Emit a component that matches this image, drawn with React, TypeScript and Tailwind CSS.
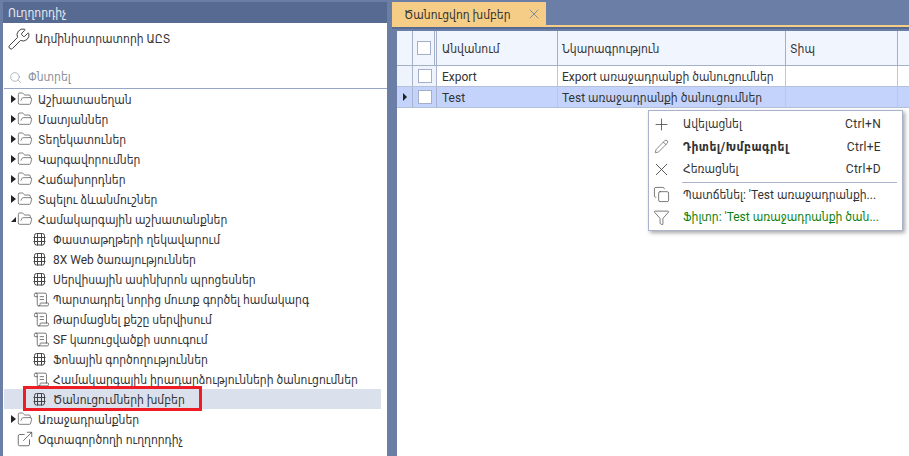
import { Wrench, Search, FolderOpen, ScrollText, ExternalLink, Plus, Pencil, X, Copy, Funnel } from "lucide-react";

const font = { fontFamily: "Roboto,'DejaVu Sans Condensed','DejaVu Sans',sans-serif" };

function GridIcon() {
  return (
    <svg width="13" height="13" viewBox="0 0 13 13" fill="none" stroke="#444" strokeWidth="1" className="shrink-0">
      <rect x="1.5" y="0.5" width="10" height="11.5" rx="2" />
      <path d="M0.5 4.5H12.5M0.5 8.5H12.5M4.5 0.5V12.5M8.5 0.5V12.5" />
    </svg>
  );
}

function Folder({ text, open }: { text: string; open?: boolean }) {
  return (
    <div className="flex h-5 items-center pl-[7px] text-[#333]">
      <span
        className={
          open
            ? "mr-[1px] h-0 w-0 border-b-[5px] border-l-[5px] border-b-[#222] border-l-transparent"
            : "mr-[1px] h-0 w-0 border-y-[4px] border-l-[5px] border-y-transparent border-l-[#222]"
        }
      />
      <FolderOpen size={16} strokeWidth={1} color="#444" className="shrink-0" />
      <span className="ml-[5px] whitespace-nowrap pt-[2px]">{text}</span>
    </div>
  );
}

function Child({ text, kind, selected }: { text: string; kind: "grid" | "script"; selected?: boolean }) {
  return (
    <div className={`relative flex h-5 items-center pl-[29px] text-[#333] ${selected ? "mr-[6px] bg-[#dbe1ec]" : ""}`}>
      <span className="flex w-[20px] shrink-0 items-center">
        {kind === "grid" ? <GridIcon /> : <ScrollText size={17} strokeWidth={1} color="#444" />}
      </span>
      <span className="whitespace-nowrap pt-[2px]">{text}</span>
      {selected && (
        <span className="absolute top-[-3px] left-[19px] h-[25px] w-[179px] border-[3px] border-[#ee1c25]" />
      )}
    </div>
  );
}

function MenuItem({
  icon,
  text,
  shortcut,
  bold,
  green,
}: {
  icon: React.ReactNode;
  text: string;
  shortcut?: string;
  bold?: boolean;
  green?: boolean;
}) {
  return (
    <div className={`flex h-[22.5px] items-center pr-[21px] ${green ? "text-[#0b7f0b]" : "text-[#333]"}`}>
      <span className="flex w-[25px] shrink-0 justify-center">{icon}</span>
      <span className={`ml-[9px] whitespace-nowrap ${bold ? "font-bold tracking-[0.5px]" : ""}`}>{text}</span>
      {shortcut && <span className="ml-auto whitespace-nowrap text-[12px] tracking-[0.3px]">{shortcut}</span>}
    </div>
  );
}

function Check() {
  return <span className="block h-[14px] w-[14px] border border-[#a3aec8] bg-white" />;
}

function Row({
  name,
  desc,
  current,
}: {
  name: string;
  desc: string;
  current?: boolean;
}) {
  const bg = current ? "bg-[#c3d3fb]" : "bg-white";
  const line = "border-r border-[#bcc6dc]";
  return (
    <div className={`flex h-[21px] items-center border-b border-[#b4c0d8] text-[12px] text-[#333] ${bg}`}>
      <span className={`flex h-full w-[16px] shrink-0 items-center justify-center border-r border-[#a9b4cc] ${current ? "bg-[#c3d3fb]" : "bg-[#eff3fc]"}`}>
        {current && <span className="h-0 w-0 border-y-[4px] border-l-[4px] border-y-transparent border-l-[#222]" />}
      </span>
      <span className={`flex h-full w-[24px] shrink-0 items-center justify-center border-r border-[#a9b4cc] ${current ? "bg-[#c3d3fb]" : "bg-[#eff3fc]"}`}>
        <Check />
      </span>
      <span className={`flex h-full w-[121px] shrink-0 items-center pl-[5px] pt-[2px] ${line}`}>{name}</span>
      <span className={`flex h-full w-[228px] shrink-0 items-center whitespace-nowrap pl-[4px] pt-[2px] ${line}`}>{desc}</span>
      <span className={`h-full w-[112px] shrink-0 ${line}`} />
      <span className="h-full flex-1" />
    </div>
  );
}

export default function App() {
  return (
    <div className="flex h-[456px] w-[909px] overflow-hidden bg-[#6b7fa6] pt-[2px] text-[12px]" style={font}>
      <aside className="ml-[3px] flex h-full w-[384px] shrink-0 flex-col">
        <div className="flex h-[21px] shrink-0 items-center bg-[#566a92] pl-[5px] text-[12px] text-[#e6eaf3]">Ուղղորդիչ</div>
        <div className="flex flex-1 flex-col bg-white pl-[1px]">
          <div className="flex h-[32px] shrink-0 items-center pl-[3px] text-[#333]">
            <Wrench size={24} strokeWidth={1} color="#444" className="shrink-0" />
            <span className="ml-[4px]">Ադմինիստրատորի ԱԸՏ</span>
          </div>
          <div className="mt-[11px] flex h-[23px] shrink-0 items-center border-b border-[#97a6c4] pl-[5px] text-[#8a8f99]">
            <Search size={13} strokeWidth={1.25} color="#8c99ac" />
            <span className="ml-[6px]">Փնտրել</span>
          </div>
          <div>
            <Folder text="Աշխատասեղան" />
            <Folder text="Մատյաններ" />
            <Folder text="Տեղեկատուներ" />
            <Folder text="Կարգավորումներ" />
            <Folder text="Հաճախորդներ" />
            <Folder text="Տպելու ձևանմուշներ" />
            <Folder text="Համակարգային աշխատանքներ" open />
            <Child kind="grid" text="Փաստաթղթերի ղեկավարում" />
            <Child kind="grid" text="8X Web ծառայություններ" />
            <Child kind="grid" text="Սերվիսային ասինխրոն պրոցեսներ" />
            <Child kind="script" text="Պարտադրել նորից մուտք գործել համակարգ" />
            <Child kind="script" text="Թարմացնել քեշը սերվիսում" />
            <Child kind="script" text="SF կառուցվածքի ստուգում" />
            <Child kind="grid" text="Ֆոնային գործողություններ" />
            <Child kind="script" text="Համակարգային իրադարձությունների ծանուցումներ" />
            <Child kind="grid" text="Ծանուցումների խմբեր" selected />
            <Folder text="Առաջադրանքներ" />
            <div className="flex h-5 items-center pl-[12px] text-[#333]">
              <ExternalLink size={18} strokeWidth={1} color="#444" />
              <span className="ml-[4px] pt-[2px]">Օգտագործողի ուղղորդիչ</span>
            </div>
          </div>
        </div>
      </aside>

      <main className="ml-[5px] flex min-w-0 flex-1 flex-col">
        <div className="flex h-[23px] shrink-0 items-end">
          <div className="flex h-[23px] w-[154px] items-center justify-between bg-[#f5cd86] pr-[4px] pl-[12px] text-[#333]">
            <span className="pt-[2px]">Ծանուցվող խմբեր</span>
            <X size={16} strokeWidth={1.25} color="#6b7fa6" />
          </div>
        </div>
        <div className="h-[2px] shrink-0 bg-[#f5cd86]" />
        <div className="h-[2px] shrink-0 bg-[#566a92]" />
        <div className="ml-[5px] mt-[2px] flex flex-1 flex-col bg-white">
          <div className="flex h-[35px] shrink-0 items-center border-b border-[#a4afc8] bg-[#f1f5fe] text-[12px] text-[#333]">
            <span className="h-full w-[16px] shrink-0 border-r border-[#a4afc8]" />
            <span className="flex h-full w-[24px] shrink-0 items-center justify-center border-r-[3px] border-double border-[#a4afc8]">
              <Check />
            </span>
            <span className="flex h-full w-[121px] shrink-0 items-center border-r border-[#a4afc8] pl-[5px] pt-[2px]">Անվանում</span>
            <span className="flex h-full w-[228px] shrink-0 items-center border-r border-[#a4afc8] pl-[4px] pt-[2px]">Նկարագրություն</span>
            <span className="flex h-full w-[112px] shrink-0 items-center border-r border-[#a4afc8] pl-[4px] pt-[2px]">Տիպ</span>
            <span className="h-full flex-1" />
          </div>
          <Row name="Export" desc="Export առաջադրանքի ծանուցումներ" />
          <Row name="Test" desc="Test առաջադրանքի ծանուցումներ" current />
          <div className="relative flex-1">
            <div className="absolute top-[2px] left-[251px] h-[121px] w-[255px] border border-[#a9b4cc] bg-white py-[2px] shadow-[2px_2px_4px_rgba(0,0,0,0.35)]">
              <MenuItem icon={<Plus size={19} strokeWidth={1} color="#444" />} text="Ավելացնել" shortcut="Ctrl+N" />
              <MenuItem icon={<Pencil size={15} strokeWidth={1} color="#444" />} text="Դիտել/Խմբագրել" shortcut="Ctrl+E" bold />
              <MenuItem icon={<X size={21} strokeWidth={1} color="#444" />} text="Հեռացնել" shortcut="Ctrl+D" />
              <div className="my-[1px] ml-[33px] mr-[5px] border-t border-[#a9b4cc]" />
              <MenuItem icon={<Copy size={17} strokeWidth={1} color="#444" />} text="Պատճենել: 'Test առաջադրանքի..." />
              <MenuItem icon={<Funnel size={17} strokeWidth={1} color="#444" />} text="Ֆիլտր: 'Test առաջադրանքի ծան..." green />
            </div>
          </div>
        </div>
      </main>
    </div>
  );
}
